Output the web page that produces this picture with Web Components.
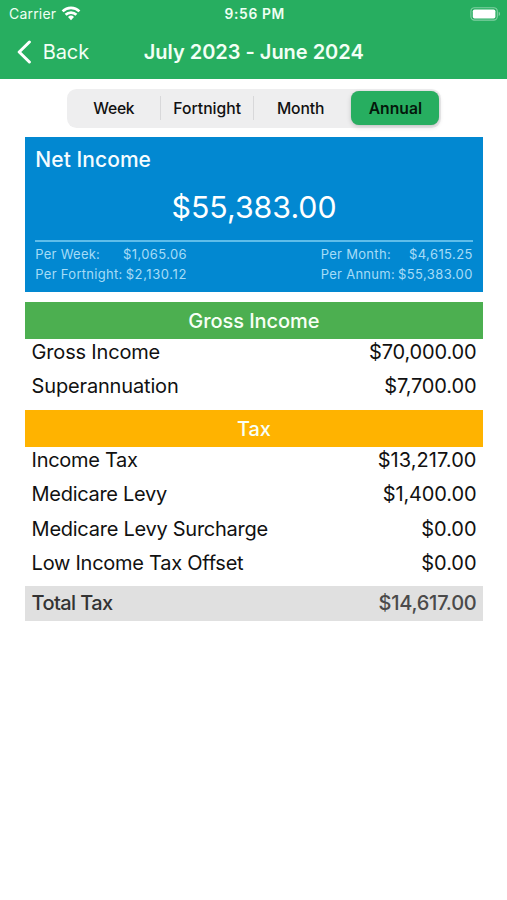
<!DOCTYPE html>
<html lang="en">
<head>
<meta charset="utf-8">
<title>July 2023 - June 2024</title>
<style>
	html, body {
		margin: 0;
		height: 100%;
		background: #fff;
	}
	body {
		font-family: Inter, "Liberation Sans", sans-serif;
		color: #111;
		overflow: hidden;
	}
</style>
</head>
<body>

<pay-screen>
	<status-bar slot="header" carrier="Carrier" time="9:56 PM"></status-bar>
	<nav-bar slot="header" back="Back">July 2023 - June 2024</nav-bar>

	<segmented-control>
		<segment-item style="--tracking: -.3px">Week</segment-item>
		<segment-item divided>Fortnight</segment-item>
		<segment-item divided style="--tracking: -.15px">Month</segment-item>
		<segment-item selected>Annual</segment-item>
	</segmented-control>

	<net-income heading="Net Income" amount="$55,383.00">
		<period-amount slot="left" label="Per Week:" style="--label-tracking: .25px; --tracking: .38px">$1,065.06</period-amount>
		<period-amount slot="left" label="Per Fortnight:" style="--label-tracking: .3px; --tracking: .6px">$2,130.12</period-amount>
		<period-amount slot="right" label="Per Month:" style="--label-tracking: .3px">$4,615.25</period-amount>
		<period-amount slot="right" label="Per Annum:" style="--label-tracking: .28px">$55,383.00</period-amount>
	</net-income>

	<pay-section heading="Gross Income" style="--bar: #4caf50">
		<pay-row label="Gross Income" style="--label-tracking: -.18px; --tracking: -.15px">$70,000.00</pay-row>
		<pay-row label="Superannuation" style="--label-tracking: -.16px; --tracking: -.12px">$7,700.00</pay-row>
	</pay-section>

	<pay-section heading="Tax" style="--bar: #ffb300">
		<pay-row label="Income Tax" style="--label-tracking: -.3px; --tracking: .06px">$13,217.00</pay-row>
		<pay-row label="Medicare Levy" style="--label-tracking: -.3px; --tracking: -.12px">$1,400.00</pay-row>
		<pay-row label="Medicare Levy Surcharge">$0.00</pay-row>
		<pay-row label="Low Income Tax Offset">$0.00</pay-row>
		<pay-row slot="total" total label="Total Tax" style="--label-tracking: -.6px; --tracking: -.24px">$14,617.00</pay-row>
	</pay-section>
</pay-screen>

<script>
function makeTemplate(html) {
	let template = document.createElement('template');
	template.innerHTML = html;
	return template;
}

// Attaches an open root, clones the template and fills [data-attr] nodes from the host's attributes.
class PayElement extends HTMLElement {
	constructor() {
		super();
		let shadowRoot = this.attachShadow({mode: 'open'});
		shadowRoot.appendChild(document.importNode(this.constructor.template.content, true));
	}

	connectedCallback() {
		for (const node of this.shadowRoot.querySelectorAll('[data-attr]')) {
			node.textContent = this.getAttribute(node.dataset.attr);
		}
	}
}

class PayScreen extends PayElement {}
PayScreen.template = makeTemplate(`
	<style>
		:host { display: block; height: 100%; }
		header {
			height: 79.3px;
			background: #27ae60;
			color: #fff;
			display: flex;
			flex-direction: column;
		}
		main {
			display: flex;
			flex-direction: column;
			padding: 9.7px 24.5px 0 25.3px;
		}
	</style>
	<header><slot name="header"></slot></header>
	<main><slot></slot></main>
`);

class StatusBar extends PayElement {}
StatusBar.template = makeTemplate(`
	<style>
		:host {
			display: grid;
			grid-template-columns: 1fr auto 1fr;
			align-items: center;
			height: 27px;
			padding: 0 6.5px 0 9px;
			font-size: 14px;
			line-height: 20px;
			color: #effff3;
		}
		.carrier { display: flex; align-items: center; gap: 5px; letter-spacing: .2px; }
		.time { font-weight: 600; font-size: 13.8px; letter-spacing: .65px; }
		.battery { justify-self: end; }
		svg { display: block; }
	</style>
	<div class="carrier">
		<span data-attr="carrier"></span>
		<svg width="20" height="15" viewBox="0 0 20 15" fill="none" stroke="#fff" stroke-width="2.7">
			<path d="M1.6 5.4a11.9 11.9 0 0 1 16.8 0"/>
			<path d="M4.6 8.8a7.6 7.6 0 0 1 10.8 0"/>
			<path d="M10 14.2l-3-3.3a4.3 4.3 0 0 1 6 0z" fill="#fff" stroke="none"/>
		</svg>
	</div>
	<span class="time" data-attr="time"></span>
	<svg class="battery" width="31" height="14" viewBox="0 0 31 14">
		<rect x=".9" y=".7" width="26.4" height="12.4" rx="3.6" fill="none" stroke="#fff" stroke-opacity=".42" stroke-width="1.1"/>
		<rect x="2.8" y="2.4" width="22.6" height="9.1" rx="1.8" fill="#fff"/>
		<path d="M28.7 4.8q1.4.5 1.4 2.1t-1.4 2.1z" fill="#fff" fill-opacity=".42"/>
	</svg>
`);

class NavBar extends PayElement {}
NavBar.template = makeTemplate(`
	<style>
		:host {
			display: grid;
			grid-template-columns: 1fr auto 1fr;
			align-items: center;
			height: 50.6px;
			padding: 0 15px 0 15.5px;
			font-size: 20px;
			line-height: 28px;
			color: #f2fff5;
		}
		.back { display: flex; align-items: center; gap: 11.2px; letter-spacing: -.1px; }
		.title { font-weight: 600; letter-spacing: -.02px; }
		svg { display: block; }
	</style>
	<div class="back">
		<svg width="16" height="24" viewBox="0 0 16 24" fill="none" stroke="#fff" stroke-width="3" stroke-linecap="round" stroke-linejoin="round">
			<path d="M13.4 2L3.2 12l10.2 10"/>
		</svg>
		<span data-attr="back"></span>
	</div>
	<span class="title"><slot></slot></span>
`);

class SegmentedControl extends PayElement {}
SegmentedControl.template = makeTemplate(`
	<style>
		:host {
			display: grid;
			grid-template-columns: repeat(4, 1fr);
			align-self: center;
			box-sizing: border-box;
			width: 373.5px;
			height: 39px;
			margin-bottom: 8.8px;
			border-radius: 9.5px;
			background: #eeeeef;
		}
	</style>
	<slot></slot>
`);

class SegmentItem extends PayElement {}
SegmentItem.template = makeTemplate(`
	<style>
		:host {
			display: flex;
			align-items: center;
			justify-content: center;
			position: relative;
			font-size: 15.7px;
			font-weight: 500;
			letter-spacing: var(--tracking, 0);
			color: #111;
			padding-top: .6px;
		}
		:host([divided])::before {
			content: "";
			position: absolute;
			left: -.7px;
			top: 7.5px;
			bottom: 7.5px;
			width: 1.2px;
			background: #d8d8da;
		}
		:host([selected]) {
			margin: 2.4px 1.2px 2.6px 4px;
			border-radius: 8px;
			background: #27ae60;
			color: #04180b;
			font-weight: 600;
			box-shadow: 0 2px 5px rgba(0, 0, 0, .16), 0 0 1px rgba(0, 0, 0, .2);
		}
	</style>
	<slot></slot>
`);

class NetIncome extends PayElement {}
NetIncome.template = makeTemplate(`
	<style>
		:host {
			display: flex;
			flex-direction: column;
			box-sizing: border-box;
			height: 155px;
			margin-bottom: 10px;
			padding: 9px 9.7px 0 10px;
			background: #0288d1;
			color: #f5fcff;
		}
		.heading { font-size: 21px; line-height: 28px; font-weight: 450; letter-spacing: .06px; }
		.amount { font-size: 30.3px; line-height: 40px; margin-top: 13px; text-align: center; color: #fff; }
		.periods {
			display: flex;
			justify-content: space-between;
			margin-top: 13px;
			padding-top: 1.8px;
			border-top: 2px solid #5fbdea;
		}
		.column { display: flex; flex-direction: column; }
	</style>
	<div class="heading" data-attr="heading"></div>
	<div class="amount" data-attr="amount"></div>
	<div class="periods">
		<div class="column"><slot name="left"></slot></div>
		<div class="column"><slot name="right"></slot></div>
	</div>
`);

class PeriodAmount extends PayElement {}
PeriodAmount.template = makeTemplate(`
	<style>
		:host {
			display: flex;
			justify-content: space-between;
			gap: 3px;
			font-size: 13px;
			line-height: 20px;
			letter-spacing: var(--tracking, .4px);
			color: #a6dcf7;
		}
		.label { letter-spacing: var(--label-tracking, .35px); }
	</style>
	<span class="label" data-attr="label"></span>
	<span><slot></slot></span>
`);

class PaySection extends PayElement {}
PaySection.template = makeTemplate(`
	<style>
		:host { display: flex; flex-direction: column; margin-bottom: 9.3px; }
		.heading {
			height: 37.2px;
			line-height: 38.5px;
			background: var(--bar);
			color: #f8fff6;
			font-size: 20px;
			font-weight: 450;
			letter-spacing: -.06px;
			text-align: center;
		}
		.rows { display: flex; flex-direction: column; gap: 7.5px; }
		::slotted([total]) { margin-top: 8.5px; }
	</style>
	<div class="heading" data-attr="heading"></div>
	<div class="rows"><slot></slot></div>
	<slot name="total"></slot>
`);

class PayRow extends PayElement {}
PayRow.template = makeTemplate(`
	<style>
		:host {
			display: flex;
			justify-content: space-between;
			padding: 0 6px 0 6.3px;
			font-size: 20px;
			line-height: 27px;
			letter-spacing: var(--tracking, -.05px);
		}
		:host([total]) {
			height: 35.3px;
			line-height: 35.5px;
			background: #e0e0e0;
			color: #4a4a4a;
			font-weight: 450;
		}
		.label { letter-spacing: var(--label-tracking, -.26px); }
		:host([total]) .label { color: #333; }
	</style>
	<span class="label" data-attr="label"></span>
	<span><slot></slot></span>
`);

window.customElements.define('pay-screen', PayScreen);
window.customElements.define('status-bar', StatusBar);
window.customElements.define('nav-bar', NavBar);
window.customElements.define('segmented-control', SegmentedControl);
window.customElements.define('segment-item', SegmentItem);
window.customElements.define('net-income', NetIncome);
window.customElements.define('period-amount', PeriodAmount);
window.customElements.define('pay-section', PaySection);
window.customElements.define('pay-row', PayRow);
</script>
</body>
</html>
